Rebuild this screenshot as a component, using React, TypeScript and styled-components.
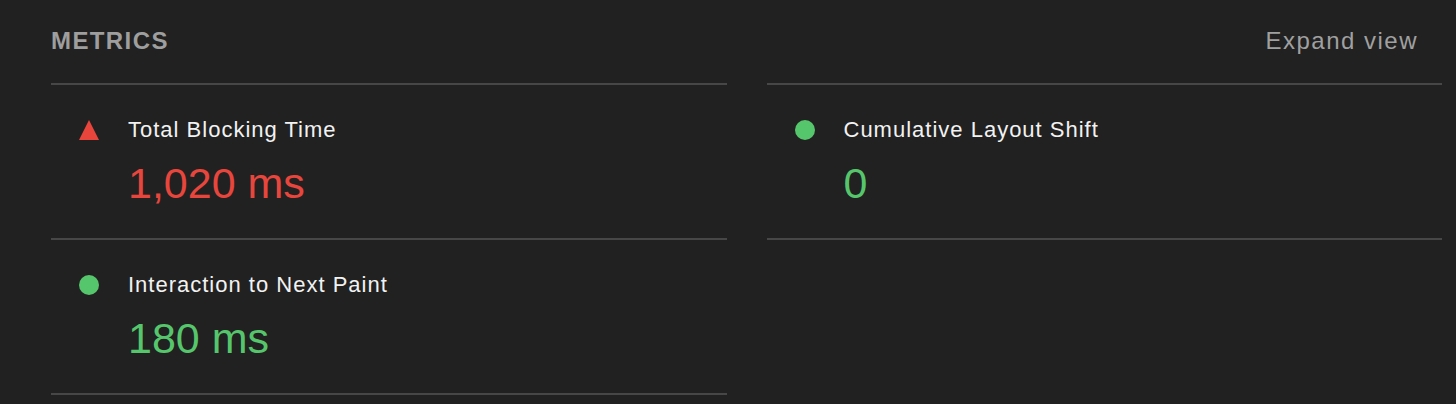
import React from "react";
import styled, { createGlobalStyle } from "styled-components";

const GlobalStyle = createGlobalStyle`
  html, body {
    margin: 0;
    padding: 0;
    background: #212121;
  }
  body {
    font-family: "Liberation Sans", Arial, Helvetica, sans-serif;
    -webkit-font-smoothing: antialiased;
  }
`;

const Page = styled.div`
  background: #212121;
  width: 1456px;
  height: 404px;
  box-sizing: border-box;
  padding: 26px 14px 0 51px;
  overflow: hidden;
`;

const Header = styled.div`
  display: flex;
  align-items: center;
  justify-content: space-between;
  height: 30px;
  margin-bottom: 27px;
`;

const Title = styled.div`
  font-size: 24px;
  line-height: 30px;
  font-weight: 700;
  letter-spacing: 1.4px;
  color: #9e9e9e;
  text-transform: uppercase;
`;

const ExpandLink = styled.div`
  font-size: 24px;
  line-height: 30px;
  letter-spacing: 1.5px;
  color: #a0a0a0;
  margin-right: 24px;
`;

const Grid = styled.div`
  display: grid;
  grid-template-columns: 1fr 1fr;
  column-gap: 40px;
  align-items: start;
`;

const Column = styled.div`
  border-top: 2px solid #474747;
`;

const Metric = styled.div`
  display: grid;
  grid-template-columns: 20px 1fr;
  column-gap: 29px;
  padding: 30px 0 31px 28px;
  border-bottom: 2px solid #474747;
`;

const IconCell = styled.div`
  height: 30px;
  display: flex;
  align-items: center;
  justify-content: center;
`;

const Dot = styled.span<{ $color: string }>`
  display: block;
  width: 20px;
  height: 20px;
  border-radius: 50%;
  background: ${(p) => p.$color};
`;

const Label = styled.div`
  font-size: 22px;
  line-height: 30px;
  letter-spacing: 1px;
  color: #f2f2f2;
`;

const Value = styled.div<{ $color: string }>`
  grid-column: 2;
  margin-top: 14px;
  font-size: 43px;
  line-height: 48px;
  color: ${(p) => p.$color};
`;

const RED = "#e8463d";
const GREEN = "#56c66c";

type Status = "fail" | "pass";

const StatusIcon: React.FC<{ status: Status }> = ({ status }) =>
  status === "fail" ? (
    <svg width="20" height="20" viewBox="0 0 20 20">
      <polygon points="10,0 20,20 0,20" fill={RED} />
    </svg>
  ) : (
    <Dot $color={GREEN} />
  );

const MetricItem: React.FC<{ status: Status; label: string; value: string }> = ({
  status,
  label,
  value,
}) => (
  <Metric>
    <IconCell>
      <StatusIcon status={status} />
    </IconCell>
    <Label>{label}</Label>
    <Value $color={status === "fail" ? RED : GREEN}>{value}</Value>
  </Metric>
);

export default function App() {
  return (
    <>
      <GlobalStyle />
      <Page>
        <Header>
          <Title>Metrics</Title>
          <ExpandLink>Expand view</ExpandLink>
        </Header>
        <Grid>
          <Column>
            <MetricItem status="fail" label="Total Blocking Time" value="1,020 ms" />
            <MetricItem status="pass" label="Interaction to Next Paint" value="180 ms" />
          </Column>
          <Column>
            <MetricItem status="pass" label="Cumulative Layout Shift" value="0" />
          </Column>
        </Grid>
      </Page>
    </>
  );
}
